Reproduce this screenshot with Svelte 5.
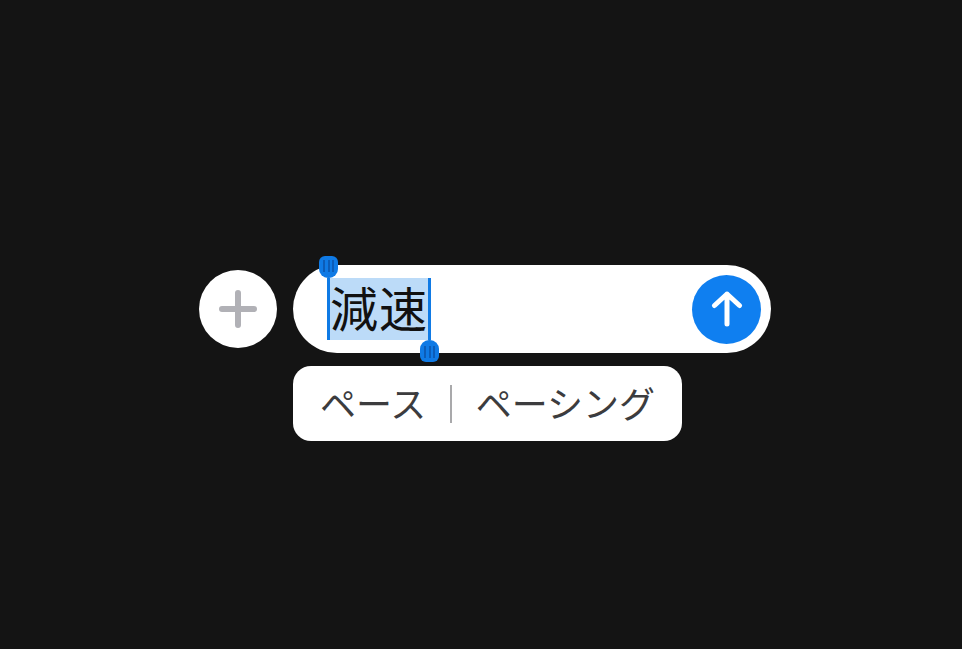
<script>
  const suggestions = ['ペース', 'ペーシング'];
</script>

<main class="stage">
  <div class="composer">
    <div class="row">
      <button class="plus" aria-label="追加">
        <svg viewBox="0 0 38 38" width="38" height="38">
          <path d="M19 3v32M3 19h32" stroke="#b1b1b6" stroke-width="6" stroke-linecap="round" fill="none" />
        </svg>
      </button>
      <div class="field">
        <span class="selection">
          <span class="caret start"><span class="grip"><i></i><i></i><i></i></span></span>
          <span class="text">減速</span>
          <span class="caret end"><span class="grip"><i></i><i></i><i></i></span></span>
        </span>
        <button class="send" aria-label="送信">
          <svg viewBox="0 0 32 38" width="32" height="38">
            <path d="M16 34V4M3.500 15.500 16 4l12.500 11.500" stroke="#fff" stroke-width="5" stroke-linecap="round" stroke-linejoin="round" fill="none" />
          </svg>
        </button>
      </div>
    </div>
    <div class="suggestions">
      {#each suggestions as s, i}
        {#if i > 0}<span class="divider"></span>{/if}
        <span class="word">{s}</span>
      {/each}
    </div>
  </div>
</main>

<style>
  :global(body) {
    margin: 0;
    background: #141414;
  }
  .stage {
    width: 962px;
    height: 649px;
    box-sizing: border-box;
    padding: 265px 0 0 199px;
    background: #141414;
    overflow: hidden;
    font-family: "Noto Sans CJK JP", "Noto Sans", sans-serif;
  }
  .composer {
    display: flex;
    flex-direction: column;
    gap: 13px;
  }
  .row {
    display: flex;
    align-items: center;
    gap: 16px;
  }
  button {
    border: 0;
    padding: 0;
    display: flex;
    align-items: center;
    justify-content: center;
    border-radius: 50%;
  }
  .plus {
    width: 78px;
    height: 78px;
    background: #fff;
  }
  .field {
    width: 478px;
    height: 88px;
    box-sizing: border-box;
    padding: 0 10px 0 34px;
    background: #fff;
    border-radius: 44px;
    display: flex;
    align-items: center;
    justify-content: space-between;
  }
  .selection {
    position: relative;
    width: 104px;
    height: 62px;
    background: #bcdbf8;
    display: flex;
    align-items: flex-start;
    justify-content: center;
  }
  .text {
    font-size: 48px;
    line-height: 62px;
    color: #111;
    white-space: nowrap;
    letter-spacing: 1px;
    margin-top: -3px;
  }
  .caret {
    position: absolute;
    top: 0;
    bottom: 0;
    width: 3px;
    background: #0f7ae5;
  }
  .caret.start { left: 0; }
  .caret.end { right: 0; }
  .grip {
    position: absolute;
    left: -8px;
    width: 19px;
    height: 22px;
    box-sizing: border-box;
    padding: 4px 4px 6px;
    background: #0f7ae5;
    border-radius: 6px 6px 9px 9px;
    display: flex;
    justify-content: space-between;
  }
  .start .grip { top: -22px; }
  .end .grip { bottom: -22px; border-radius: 9px 9px 6px 6px; padding: 6px 4px 4px; }
  .grip i {
    width: 2px;
    background: #0b5cb8;
  }
  .send {
    width: 69px;
    height: 69px;
    background: #0f7ff0;
  }
  .suggestions {
    margin-left: 94px;
    width: 389px;
    height: 75px;
    box-sizing: border-box;
    padding: 0 27px;
    background: #fff;
    border-radius: 18px;
    display: flex;
    align-items: center;
    gap: 24px;
  }
  .word {
    font-size: 36px;
    line-height: 75px;
    color: #3c3c3e;
    white-space: nowrap;
    margin-top: -2px;
  }
  .divider {
    width: 2px;
    height: 38px;
    background: #a9a9ab;
  }
</style>
